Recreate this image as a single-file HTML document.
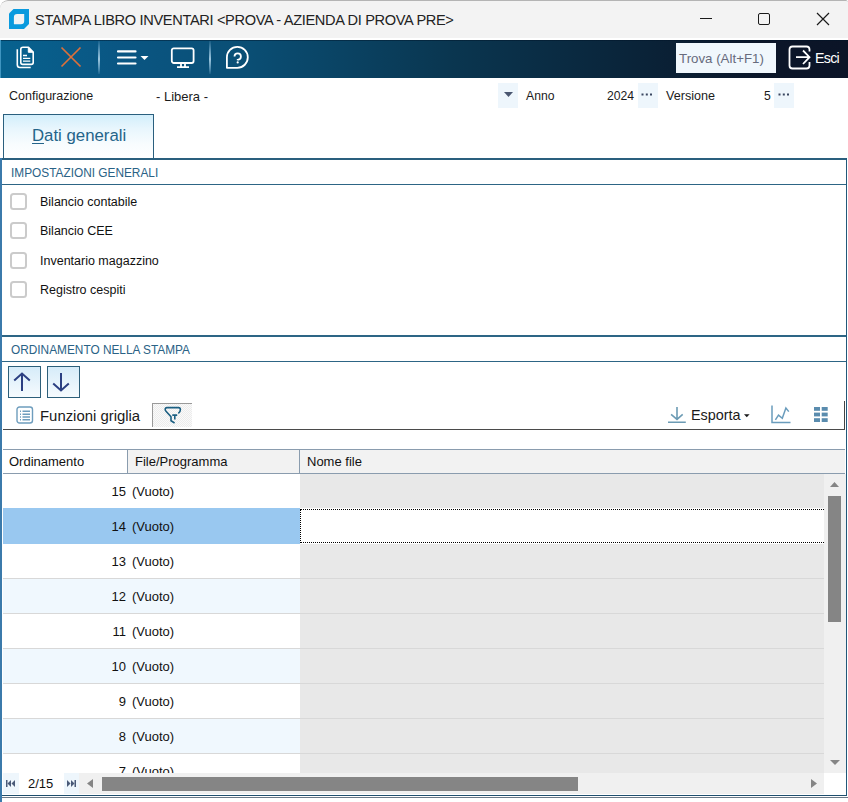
<!DOCTYPE html>
<html><head><meta charset="utf-8">
<style>
*{margin:0;padding:0;box-sizing:border-box}
html,body{width:848px;height:802px;overflow:hidden;background:#fff}
body{position:relative;font-family:"Liberation Sans",sans-serif;color:#1b1b1b}
.a{position:absolute}
.t{position:absolute;white-space:nowrap;line-height:1}
#win{left:0;top:0;width:848px;height:802px;background:#fff;border-top-left-radius:8px;border-top-right-radius:2px;overflow:hidden}
#title{left:0;top:0;width:848px;height:38px;background:#f3f3f3;border-top:1px solid #b4b4b4;border-top-left-radius:8px;border-top-right-radius:2px}
#tb{left:0;top:40px;width:848px;height:38px;background:linear-gradient(90deg,#07628f 0px,#0a5683 120px,#0a4e74 250px,#0a3650 450px,#0a2237 650px,#0b1629 760px,#0b1427 848px);border-top:1px solid rgba(0,20,40,0.45)}
.sep{width:2px;background:linear-gradient(180deg,rgba(140,190,220,0.1) 0%,rgba(140,190,220,0.55) 25%,#9cc6de 55%,rgba(140,190,220,0.5) 85%,rgba(140,190,220,0.1) 100%)}
.hdr{color:#2a6286;font-size:11.85px}
.lbl{font-size:12.5px;color:#111}
.cb{width:17px;height:17px;border:2px solid #cbcbcb;border-radius:3.5px;background:#fff}
.row{left:2px;width:822px;height:35px}
.cell{font-size:13px;color:#111}
</style></head><body>
<div id="win" class="a">
  <!-- title bar -->
  <div id="title" class="a"></div>
  <svg class="a" style="left:9px;top:9px" width="20" height="20" viewBox="0 0 20 20">
    <path d="M4.5 0H20V15L15 20H0V4.5Z" fill="#0a9ade"/>
    <path d="M8.2 4.9H15.2V11.9A3.3 3.3 0 0 1 11.9 15.2H4.9V8.2A3.3 3.3 0 0 1 8.2 4.9Z" fill="#f1f3f5"/>
  </svg>
  <div class="t" style="left:35px;top:13px;font-size:14.6px;letter-spacing:-0.34px;color:#222">STAMPA LIBRO INVENTARI &lt;PROVA - AZIENDA DI PROVA PRE&gt;</div>
  <div class="a" style="left:700px;top:18px;width:12px;height:1px;background:#1a1a1a"></div>
  <div class="a" style="left:758px;top:13px;width:12px;height:12px;border:1.2px solid #1a1a1a;border-radius:2px"></div>
  <svg class="a" style="left:816px;top:12px" width="14" height="14" viewBox="0 0 14 14"><path d="M1 1L13 13M13 1L1 13" stroke="#1a1a1a" stroke-width="1.2"/></svg>

  <!-- toolbar -->
  <div id="tb" class="a"></div>
  <div class="a" style="left:0;top:40px;width:1px;height:38px;background:#3f95c0"></div>
  <div class="a" style="left:0;top:38px;width:848px;height:2px;background:#fff"></div>
  <!-- copy icon -->
  <svg class="a" style="left:12px;top:42px" width="28" height="30" viewBox="0 0 28 30" fill="none" stroke="#fff" stroke-width="1.6">
    <path d="M5.3 7.2V22.8C5.3 24.6 6.2 25.5 8 25.5H18.7"/>
    <path d="M11 5.3H16.5L21.2 10V20.5C21.2 21.8 20.6 22.4 19.3 22.4H10.7C9.4 22.4 8.8 21.8 8.8 20.5V7.3C8.8 6 9.4 5.3 11 5.3Z" stroke-linejoin="round"/>
    <path d="M16.3 5.3V10.3H21.2Z" fill="#fff" stroke-width="1"/>
    <path d="M11 13.5H15M11 16.4H18.3M11 19.1H18.3" stroke-width="1.3"/>
  </svg>
  <svg class="a" style="left:60px;top:46px" width="22" height="22" viewBox="0 0 22 22"><path d="M1.5 1.5L20.5 20.5M20.5 1.5L1.5 20.5" stroke="#de7039" stroke-width="1.7"/></svg>
  <div class="a sep" style="left:98px;top:41px;height:33px"></div>
  <svg class="a" style="left:116px;top:49px" width="34" height="16" viewBox="0 0 34 16"><path d="M2 2.4H19.5M2 8.5H19.5M2 14.5H19.5" stroke="#fff" stroke-width="2.2" stroke-linecap="round"/><path d="M24.5 7H32.5L28.5 11Z" fill="#fff"/></svg>
  <svg class="a" style="left:170px;top:46px" width="26" height="23" viewBox="0 0 26 23" fill="none" stroke="#fff" stroke-width="1.8">
    <rect x="1.8" y="2.3" width="21.8" height="14.7" rx="2"/>
    <path d="M11 17.5V20.5M15 17.5V20.5M7 21.2H19"/>
  </svg>
  <div class="a sep" style="left:209px;top:41px;height:33px"></div>
  <svg class="a" style="left:225px;top:45px" width="25" height="25" viewBox="0 0 25 25" fill="none" stroke="#fff" stroke-width="1.8">
    <path d="M1.9 22.8V12.35A10.45 10.45 0 1 1 12.35 22.8Z" stroke-linejoin="round"/>
    <path d="M9.5 11.6A3.2 3.2 0 1 1 12.7 14.8V15.3"/>
    <circle cx="12.7" cy="17.4" r="1.1" fill="#fff" stroke="none"/>
  </svg>
  <div class="a" style="left:676px;top:43px;width:100px;height:30px;background:#f0f7fc"></div>
  <div class="t" style="left:679px;top:52px;font-size:13.3px;color:#676b7c">Trova (Alt+F1)</div>
  <svg class="a" style="left:788px;top:45px" width="24" height="25" viewBox="0 0 24 25" fill="none" stroke="#fff" stroke-width="1.8">
    <path d="M21.5 6.5V4.5C21.5 2.5 20.5 1.5 18.5 1.5H4.5C2.5 1.5 1.5 2.5 1.5 4.5V20.5C1.5 22.5 2.5 23.5 4.5 23.5H18.5C20.5 23.5 21.5 22.5 21.5 20.5V17"/>
    <path d="M8 12.2H21.5M15 5.5L21.5 12.2L15 19"/>
  </svg>
  <div class="t" style="left:815px;top:51px;font-size:14.2px;letter-spacing:-0.7px;color:#fff">Esci</div>

  <!-- config row -->
  <div class="t" style="left:9px;top:90px;font-size:12.5px">Configurazione</div>
  <div class="t" style="left:156px;top:90px;font-size:13px">- Libera -</div>
  <div class="a" style="left:498px;top:83px;width:20px;height:25px;background:#eef6fc"></div>
  <svg class="a" style="left:504px;top:92px" width="9" height="5" viewBox="0 0 9 5"><path d="M0 0H9L4.5 5Z" fill="#4a5670"/></svg>
  <div class="t" style="left:526px;top:90px;font-size:12.2px">Anno</div>
  <div class="t" style="left:607px;top:90px;font-size:12.2px">2024</div>
  <div class="a" style="left:638px;top:83px;width:20px;height:25px;background:#eef6fc"></div>
  <svg class="a" style="left:641px;top:93px" width="12" height="3" viewBox="0 0 12 3" fill="#3a4660"><rect x="0.5" y="0.5" width="2" height="2"/><rect x="4.8" y="0.5" width="2" height="2"/><rect x="9" y="0.5" width="2" height="2"/></svg>
  <div class="t" style="left:666px;top:90px;font-size:12.6px">Versione</div>
  <div class="t" style="left:764px;top:90px;font-size:12.2px">5</div>
  <div class="a" style="left:774px;top:83px;width:20px;height:25px;background:#eef6fc"></div>
  <svg class="a" style="left:778px;top:93px" width="12" height="3" viewBox="0 0 12 3" fill="#3a4660"><rect x="0.5" y="0.5" width="2" height="2"/><rect x="4.8" y="0.5" width="2" height="2"/><rect x="9" y="0.5" width="2" height="2"/></svg>

  <!-- tab -->
  <div class="a" style="left:3px;top:114px;width:151px;height:46px;border:1.2px solid #2a5f7e;border-bottom:none;background:linear-gradient(180deg,#d2eefb 0%,#e8f6fd 30%,#f8fcfe 65%,#ffffff 100%)"></div>
  <div class="t" style="left:32px;top:128px;font-size:16.8px;color:#24648a">Dati generali</div>
  <div class="a" style="left:32px;top:143px;width:12px;height:1px;background:#24648a"></div>

  <!-- panel -->
  <div class="a" style="left:0;top:158px;width:847px;height:2px;background:#2a5f7e"></div>
  

  <!-- panel borders -->
  <div class="a" style="left:846px;top:158px;width:1px;height:638px;background:#22587a"></div>
  <div class="a" style="left:0;top:795px;width:847px;height:1px;background:#1f4f6e"></div>
  <div class="a" style="left:0;top:797px;width:848px;height:1px;background:#6b7a88"></div>
  <div class="a" style="left:0;top:158px;width:2px;height:644px;background:#3b7aab"></div>

  <!-- IMPOSTAZIONI GENERALI -->
  <div class="t hdr" style="left:11px;top:168px">IMPOSTAZIONI GENERALI</div>
  <div class="a" style="left:2px;top:184px;width:844px;height:1px;background:#2d6585"></div>
  <div class="a cb" style="left:10px;top:193px"></div>
  <div class="t lbl" style="left:40px;top:196px">Bilancio contabile</div>
  <div class="a cb" style="left:10px;top:222px"></div>
  <div class="t lbl" style="left:40px;top:225px">Bilancio CEE</div>
  <div class="a cb" style="left:10px;top:252px"></div>
  <div class="t lbl" style="left:40px;top:255px">Inventario magazzino</div>
  <div class="a cb" style="left:10px;top:281px"></div>
  <div class="t lbl" style="left:40px;top:284px">Registro cespiti</div>

  <!-- ORDINAMENTO -->
  <div class="a" style="left:2px;top:335px;width:844px;height:2px;background:#2d6585"></div>
  <div class="t hdr" style="left:11px;top:345px">ORDINAMENTO NELLA STAMPA</div>
  <div class="a" style="left:2px;top:361px;width:844px;height:1px;background:#2d6585"></div>
  <div class="a" style="left:8px;top:366px;width:33px;height:32px;border:1px solid #2d5f7a;background:linear-gradient(180deg,#d6ecf9 0%,#f6fbfe 100%)"></div>
  <svg class="a" style="left:13px;top:372px" width="18" height="20" viewBox="0 0 18 20" fill="none" stroke="#2b3f82" stroke-width="2"><path d="M9 1.5V19M1.2 8.5L9 1.5L16.8 8.5"/></svg>
  <div class="a" style="left:47px;top:366px;width:33px;height:32px;border:1px solid #2d5f7a;background:linear-gradient(180deg,#d6ecf9 0%,#f6fbfe 100%)"></div>
  <svg class="a" style="left:52px;top:372px" width="18" height="20" viewBox="0 0 18 20" fill="none" stroke="#2b3f82" stroke-width="2"><path d="M9 1V18.5M1.2 11.5L9 18.5L16.8 11.5"/></svg>

  <!-- grid toolbar -->
  <svg class="a" style="left:16px;top:406px" width="18" height="18" viewBox="0 0 18 18" fill="none">
    <rect x="1" y="1" width="15.5" height="16" rx="2.5" stroke="#6e9dbd" stroke-width="1.4"/>
    <path d="M4 5.2H5M6.5 5.2H14M4 8.2H5M6.5 8.2H14M4 11H5M6.5 11H14M4 13.8H5M6.5 13.8H14" stroke="#6e9dbd" stroke-width="1.4"/>
  </svg>
  <div class="t" style="left:40px;top:409px;font-size:14.9px;color:#1a1a1a">Funzioni griglia</div>
  <div class="a" style="left:152px;top:403px;width:40px;height:24px;border-top:1px solid #9a9a9a;border-left:1px solid #9a9a9a;background:repeating-conic-gradient(#ececec 0 25%,#fafafa 0 50%) 0 0/2px 2px"></div>
  <svg class="a" style="left:160px;top:403px" width="26" height="24" viewBox="0 0 26 24" fill="none" stroke="#1b5f82" stroke-width="1.6" stroke-linejoin="round">
    <path d="M18.3 10.3C19.8 9.2 20.4 8.3 20.4 6.8C20.4 5.4 19.7 4.6 18.5 4.6H7C5.8 4.6 5.2 5.4 5.2 6.5C5.2 7.3 5.6 7.9 6.2 8.5L11 13.8V17.8L14.6 20"/>
    <path d="M12.3 12.1H17.2M14.8 12.1V16.6"/>
  </svg>
  <svg class="a" style="left:668px;top:406px" width="19" height="18" viewBox="0 0 19 18" fill="none" stroke="#6c9bb4" stroke-width="1.6"><path d="M9 1V13M3.1 8.4L9 13.4L14.7 8.4M0 16.3H17.8"/></svg>
  <div class="t" style="left:691px;top:408px;font-size:14.4px;color:#1a1a1a">Esporta</div>
  <svg class="a" style="left:744px;top:414px" width="6" height="4" viewBox="0 0 6 4"><path d="M0 0.3H5.6L2.8 3.3Z" fill="#1a1a1a"/></svg>
  <svg class="a" style="left:771px;top:405px" width="20" height="19" viewBox="0 0 20 19" fill="none" stroke="#6a9cbc" stroke-width="1.5"><path d="M1 0.5V17.5H19.5"/><path d="M4.4 14.9L7.5 10.2L11.3 13.3L14.9 3L17.8 6.6"/></svg>
  <svg class="a" style="left:814px;top:407px" width="14" height="16" viewBox="0 0 14 16" fill="#5a8cae"><rect x="0" y="0" width="6" height="3.8"/><rect x="7.7" y="0" width="6" height="3.8"/><rect x="0" y="5.6" width="6" height="3.8"/><rect x="7.7" y="5.6" width="6" height="3.8"/><rect x="0" y="11.2" width="6" height="3.8"/><rect x="7.7" y="11.2" width="6" height="3.8"/></svg>
  <div class="a" style="left:844px;top:401px;width:1px;height:29px;background:#444"></div>
  <div class="a" style="left:3px;top:429px;width:842px;height:1px;background:#4a4a4a"></div>

  <!-- grid header -->
  <div class="a" style="left:3px;top:449px;width:842px;height:25px;background:#f2f2f2;border-top:1px solid #8a9cae;border-bottom:1px solid #8a9cae"></div>
  <div class="a" style="left:3px;top:450px;width:124px;height:23px;background:#fff"></div>
  <div class="a" style="left:127px;top:450px;width:1px;height:23px;background:#8a9cae"></div>
  <div class="a" style="left:299px;top:450px;width:1px;height:23px;background:#8a9cae"></div>
  <div class="t cell" style="left:9px;top:455px">Ordinamento</div>
  <div class="t cell" style="left:135px;top:455px">File/Programma</div>
  <div class="t cell" style="left:307px;top:455px">Nome file</div>

  <!-- rows -->
  <div class="a" style="left:3px;top:474px;width:821px;height:299px;overflow:hidden">
  <div class="a" style="left:0;top:0px;width:297px;height:34px;background:#fff"></div>
  <div class="a" style="left:297px;top:0px;width:524px;height:34px;background:#e8e8e8"></div>
  <div class="a" style="left:0;top:34px;width:822px;height:1px;background:#d8d8d8"></div>
  <div class="a" style="left:0;top:35px;width:297px;height:34px;background:#f0f8fe"></div>
  <div class="a" style="left:297px;top:35px;width:524px;height:34px;background:#e8e8e8"></div>
  <div class="a" style="left:0;top:69px;width:822px;height:1px;background:#d8d8d8"></div>
  <div class="a" style="left:0;top:70px;width:297px;height:34px;background:#fff"></div>
  <div class="a" style="left:297px;top:70px;width:524px;height:34px;background:#e8e8e8"></div>
  <div class="a" style="left:0;top:104px;width:822px;height:1px;background:#d8d8d8"></div>
  <div class="a" style="left:0;top:105px;width:297px;height:34px;background:#f0f8fe"></div>
  <div class="a" style="left:297px;top:105px;width:524px;height:34px;background:#e8e8e8"></div>
  <div class="a" style="left:0;top:139px;width:822px;height:1px;background:#d8d8d8"></div>
  <div class="a" style="left:0;top:140px;width:297px;height:34px;background:#fff"></div>
  <div class="a" style="left:297px;top:140px;width:524px;height:34px;background:#e8e8e8"></div>
  <div class="a" style="left:0;top:174px;width:822px;height:1px;background:#d8d8d8"></div>
  <div class="a" style="left:0;top:175px;width:297px;height:34px;background:#f0f8fe"></div>
  <div class="a" style="left:297px;top:175px;width:524px;height:34px;background:#e8e8e8"></div>
  <div class="a" style="left:0;top:209px;width:822px;height:1px;background:#d8d8d8"></div>
  <div class="a" style="left:0;top:210px;width:297px;height:34px;background:#fff"></div>
  <div class="a" style="left:297px;top:210px;width:524px;height:34px;background:#e8e8e8"></div>
  <div class="a" style="left:0;top:244px;width:822px;height:1px;background:#d8d8d8"></div>
  <div class="a" style="left:0;top:245px;width:297px;height:34px;background:#f0f8fe"></div>
  <div class="a" style="left:297px;top:245px;width:524px;height:34px;background:#e8e8e8"></div>
  <div class="a" style="left:0;top:279px;width:822px;height:1px;background:#d8d8d8"></div>
  <div class="a" style="left:0;top:280px;width:297px;height:34px;background:#fff"></div>
  <div class="a" style="left:297px;top:280px;width:524px;height:34px;background:#e8e8e8"></div>
  <div class="a" style="left:0;top:314px;width:822px;height:1px;background:#d8d8d8"></div>
  <div class="a" style="left:0;top:34px;width:297px;height:36px;background:#99c8f0"></div>
  <div class="a" style="left:297px;top:34px;width:524px;height:36px;background:#fff"></div>
  <div class="a" style="left:297px;top:35px;width:526px;height:34px;border:1px dotted #000"></div>
  <div class="t cell" style="right:698px;top:11px">15</div>
  <div class="t cell" style="left:129px;top:11px">(Vuoto)</div>
  <div class="t cell" style="right:698px;top:46px">14</div>
  <div class="t cell" style="left:129px;top:46px">(Vuoto)</div>
  <div class="t cell" style="right:698px;top:81px">13</div>
  <div class="t cell" style="left:129px;top:81px">(Vuoto)</div>
  <div class="t cell" style="right:698px;top:116px">12</div>
  <div class="t cell" style="left:129px;top:116px">(Vuoto)</div>
  <div class="t cell" style="right:698px;top:151px">11</div>
  <div class="t cell" style="left:129px;top:151px">(Vuoto)</div>
  <div class="t cell" style="right:698px;top:186px">10</div>
  <div class="t cell" style="left:129px;top:186px">(Vuoto)</div>
  <div class="t cell" style="right:698px;top:221px">9</div>
  <div class="t cell" style="left:129px;top:221px">(Vuoto)</div>
  <div class="t cell" style="right:698px;top:256px">8</div>
  <div class="t cell" style="left:129px;top:256px">(Vuoto)</div>
  <div class="t cell" style="right:698px;top:291px">7</div>
  <div class="t cell" style="left:129px;top:291px">(Vuoto)</div>
  </div>

  <!-- vertical scrollbar -->
  <div class="a" style="left:824px;top:474px;width:22px;height:299px;background:#f0f0f0"></div>
  <svg class="a" style="left:830px;top:482px" width="9" height="5" viewBox="0 0 9 5"><path d="M0 5H9L4.5 0Z" fill="#858585"/></svg>
  <div class="a" style="left:828px;top:496px;width:13px;height:126px;background:#858585"></div>
  <svg class="a" style="left:830px;top:760px" width="10" height="5" viewBox="0 0 10 5"><path d="M0 0H10L5 5Z" fill="#858585"/></svg>

  <!-- bottom bar -->
  <div class="a" style="left:3px;top:773px;width:821px;height:21px;background:#f0f0f0"></div>
  <div class="a" style="left:3px;top:773px;width:16px;height:21px;background:#eef6fc"></div>
  <svg class="a" style="left:6px;top:780px" width="9" height="7" viewBox="0 0 9 7" fill="#4a5a78"><rect x="0" y="0" width="1.5" height="7"/><path d="M5 0V7L1.5 3.5Z"/><path d="M9 0V7L5.5 3.5Z"/></svg>
  <div class="a" style="left:19px;top:773px;width:45px;height:21px;background:#fff"></div>
  <div class="t" style="left:28px;top:777px;font-size:13px;color:#111">2/15</div>
  <div class="a" style="left:64px;top:773px;width:15px;height:21px;background:#eef6fc"></div>
  <svg class="a" style="left:67px;top:780px" width="9" height="7" viewBox="0 0 9 7" fill="#4a5a78"><path d="M0 0V7L3.5 3.5Z"/><path d="M4 0V7L7.5 3.5Z"/><rect x="7.5" y="0" width="1.5" height="7"/></svg>
  <svg class="a" style="left:87px;top:779px" width="6" height="9" viewBox="0 0 6 9"><path d="M6 0V9L0 4.5Z" fill="#858585"/></svg>
  <div class="a" style="left:102px;top:777px;width:476px;height:14px;background:#858585"></div>
  <svg class="a" style="left:811px;top:779px" width="6" height="9" viewBox="0 0 6 9"><path d="M0 0V9L6 4.5Z" fill="#858585"/></svg>
</div>
</body></html>
